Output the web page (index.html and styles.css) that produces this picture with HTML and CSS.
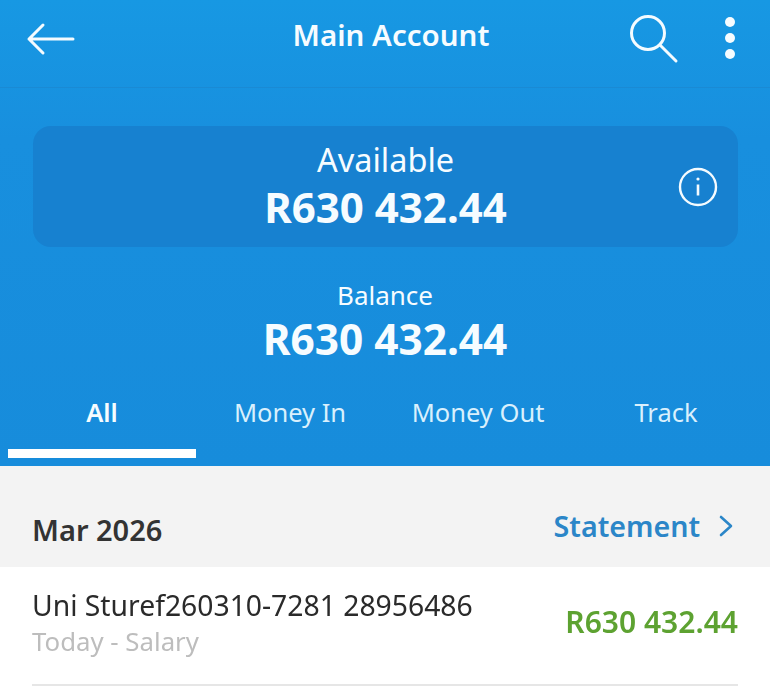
FILE: index.html
```
<!DOCTYPE html>
<html lang="en">
<head>
<meta charset="utf-8">
<title>Main Account</title>
<link rel="stylesheet" href="styles.css">
</head>
<body>
<main class="screen">
  <section class="hero">
    <header class="topbar">
      <svg class="icon-back" width="50" height="34" viewBox="0 0 50 34" fill="none" stroke="#f4fbff" stroke-width="3" stroke-linecap="round" stroke-linejoin="round"><path d="M47 17H3M17 3 3 17l14 14"/></svg>
      <h1 class="title">Main Account</h1>
      <svg class="icon-search" width="50" height="50" viewBox="0 0 50 50" fill="none" stroke="#f4fbff" stroke-width="3" stroke-linecap="round"><circle cx="19" cy="19" r="16.5"/><path d="M31 31l16 16"/></svg>
      <div class="dots"><span class="dot"></span><span class="dot"></span><span class="dot"></span></div>
    </header>
    <div class="available">
      <div class="available-label">Available</div>
      <div class="available-amount">R630 432.44</div>
      <svg class="icon-info" width="40" height="40" viewBox="0 0 40 40" fill="none" stroke="#f4fbff" stroke-width="2.4"><circle cx="20" cy="20" r="18"/><path d="M20 17.5v11" stroke-width="2.6"/><circle cx="20" cy="12" r="1.6" fill="#f4fbff" stroke="none"/></svg>
    </div>
    <div class="balance">
      <div class="balance-label">Balance</div>
      <div class="balance-amount">R630 432.44</div>
    </div>
    <nav class="tabs">
      <div class="tab tab-active">All</div>
      <div class="tab">Money In</div>
      <div class="tab">Money Out</div>
      <div class="tab">Track</div>
    </nav>
  </section>
  <section class="month">
    <div class="month-name">Mar 2026</div>
    <div class="statement">Statement
      <svg width="16" height="24" viewBox="0 0 16 24" fill="none" stroke="#2b86c8" stroke-width="2.6" stroke-linecap="round" stroke-linejoin="round"><path d="M3 3l10 9-10 9"/></svg>
    </div>
  </section>
  <section class="row">
    <div class="row-text">
      <div class="row-title">Uni Sturef260310-7281 28956486</div>
      <div class="row-sub">Today - Salary</div>
    </div>
    <div class="row-amount">R630 432.44</div>
  </section>
</main>
</body>
</html>
```
FILE: styles.css
```
* { box-sizing: border-box; margin: 0; padding: 0; }
html, body { width: 770px; height: 686px; overflow: hidden; background: #fff; }
body { font-family: "Noto Sans", "Open Sans", sans-serif; }
.screen { display: flex; flex-direction: column; height: 686px; filter: blur(0.6px); }
.hero { height: 466px; background: linear-gradient(180deg, #1798e3 0%, #188fde 30%, #178cdb 100%); color: #f6fcff; display: flex; flex-direction: column; }
.topbar { height: 88px; border-bottom: 1px solid #1a8ad4; display: flex; align-items: center; padding: 0 35px 14px 26px; position: relative; }
.title { font-size: 29.5px; font-weight: 600; position: absolute; left: 12px; right: 0; top: 14px; text-align: center; line-height: 42px; }
.icon-search { margin-left: auto; margin-top: 5px; margin-right: 46px; }
.icon-back { margin-top: 4px; }
.dots { display: flex; flex-direction: column; gap: 6px; margin-top: 2px; }
.dot { width: 10px; height: 10px; border-radius: 50%; background: #f6fcff; }
.available { margin: 38px 32px 0 33px; height: 121px; background: #1781d0; border-radius: 18px; position: relative; text-align: center; padding-top: 13px; }
.available-label { font-size: 32.5px; line-height: 42px; font-weight: 400; }
.available-amount { font-size: 42px; line-height: 50px; font-weight: 700; margin-top: 1px; }
.icon-info { position: absolute; right: 20px; top: 41px; }
.balance { text-align: center; margin-top: 31px; }
.balance-label { font-size: 26px; line-height: 34px; }
.balance-amount { font-size: 42.4px; line-height: 52px; font-weight: 700; margin-top: 1px; }
.tabs { display: grid; grid-template-columns: repeat(4, 188px); padding: 0 0 0 8px; }
.tab { height: 93px; padding-top: 29px; line-height: 36px; font-size: 25.5px; text-align: center; color: #d9f0fd; }
.tab-active { color: #f6fcff; font-weight: 600; border-bottom: 9px solid #fff; }
.month { height: 101px; background: #f3f3f3; display: flex; justify-content: space-between; align-items: center; padding: 0 36px 0 32px; }
.month-name { font-size: 29px; font-weight: 600; color: #333; padding-top: 25px; }
.statement { font-size: 28.6px; font-weight: 600; color: #2b86c8; display: flex; align-items: center; gap: 18px; padding-top: 18px; }
.row { flex: 1; margin: 0 32px; padding-bottom: 8px; border-bottom: 2px solid #e6e6e6; display: flex; justify-content: space-between; align-items: center; }
.row-title { font-size: 28.3px; line-height: 37px; color: #2a2a2a; padding-top: 2px; }
.row-sub { font-size: 25.8px; line-height: 35px; color: #bdbdbd; }
.row-amount { font-size: 30px; font-weight: 600; color: #5da231; }
```
